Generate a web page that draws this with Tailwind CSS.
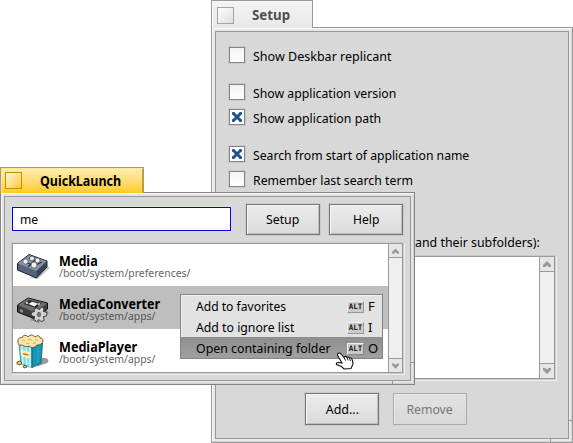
<!DOCTYPE html>
<html lang="en">
<head>
<meta charset="utf-8">
<title>QuickLaunch</title>
<script src="https://cdn.jsdelivr.net/npm/@tailwindcss/browser@4"></script>
</head>
<body class="relative w-[573px] h-[443px] overflow-hidden bg-white font-['Noto_Sans',sans-serif] text-[13px] leading-[18px] text-black">
<svg class="hidden">
  <symbol id="cross" viewBox="0 0 14 14"><path d="M3 3L11 11M11 3L3 11" stroke="#1b5291" stroke-width="2.9"/><path d="M2.500 4.500v-2h2M11.500 4.500v-2h-2M2.500 9.500v2h2M11.500 9.500v2h-2" fill="none" stroke="#1b5291" stroke-width="1"/></symbol>
  <symbol id="up" viewBox="0 0 8 6"><path d="M4 0L8 4V6H6L4 4.500L2 6H0V4Z" fill="#999"/></symbol>
</svg>

<!-- Setup window -->
<section class="absolute left-[211px] top-0 w-[362px] h-[443px] flex flex-col">
  <header class="relative z-10 w-[102px] h-[28px] shrink-0 border border-b-0 border-[#999] bg-linear-to-b from-[#f4f4f4] to-[#e8e8e8] flex items-center shadow-[inset_1px_1px_0_#fafafa]">
    <i class="ml-[5px] mb-[-1px] w-[17px] h-[17px] border border-[#a4a4a4] bg-linear-to-br from-white to-[#dedede]"></i>
    <h1 class="ml-[18px] text-[13.300px] font-bold text-[#505050]">Setup</h1>
  </header>
  <div class="relative mt-[-1px] flex-1 border border-[#999] bg-[#e8e8e8] p-[3px] shadow-[inset_1px_1px_0_#fafafa,inset_-1px_-1px_0_#d4d4d4]">
    <div class="h-full border border-[#999] bg-[#d8d8d8] pl-[13px] pt-[15px]">
      <div class="flex items-center h-[16px]"><i class="w-[16px] h-[16px] border border-[#858585] bg-linear-to-b from-[#f3f3f3] to-white shadow-[0_0_0_1px_#cacaca]"></i><span class="ml-[8px] mt-[2px] whitespace-nowrap origin-left scale-x-[.963]">Show Deskbar replicant</span></div>
      <div class="mt-[21px] flex items-center h-[16px]"><i class="w-[16px] h-[16px] border border-[#858585] bg-linear-to-b from-[#f3f3f3] to-white shadow-[0_0_0_1px_#cacaca]"></i><span class="ml-[8px] mt-[2px] whitespace-nowrap origin-left scale-x-[.943]">Show application version</span></div>
      <div class="mt-[9px] flex items-center h-[16px]"><i class="w-[16px] h-[16px] border border-[#858585] bg-white shadow-[0_0_0_1px_#cacaca]"><svg width="14" height="14"><use href="#cross"/></svg></i><span class="ml-[8px] mt-[2px] whitespace-nowrap origin-left scale-x-[.948]">Show application path</span></div>
      <div class="mt-[21px] flex items-center h-[16px]"><i class="w-[16px] h-[16px] border border-[#858585] bg-white shadow-[0_0_0_1px_#cacaca]"><svg width="14" height="14"><use href="#cross"/></svg></i><span class="ml-[8px] mt-[2px] whitespace-nowrap origin-left scale-x-[.938]">Search from start of application name</span></div>
      <div class="mt-[9px] flex items-center h-[16px]"><i class="w-[16px] h-[16px] border border-[#858585] bg-linear-to-b from-[#f3f3f3] to-white shadow-[0_0_0_1px_#cacaca]"></i><span class="ml-[8px] mt-[2px] whitespace-nowrap origin-left scale-x-[.945]">Remember last search term</span></div>
      <p class="mt-[46px] ml-[186px] whitespace-nowrap origin-left scale-x-[.952]">and their subfolders):</p>
      <div class="mt-[5px] w-[326px] h-[123px] border border-[#999] bg-white flex justify-end shadow-[0_0_0_1px_#cacaca,1px_1px_0_1px_#eee]">
        <div class="w-[15px] border-l border-[#999] bg-[#efefef] flex flex-col justify-between">
          <div class="h-[15px] border-b border-[#999] bg-[#e6e6e6] flex items-center justify-center"><svg width="8" height="6"><use href="#up"/></svg></div>
          <div class="h-[15px] border-t border-[#999] bg-[#e6e6e6] flex items-center justify-center"><svg class="rotate-180" width="8" height="6"><use href="#up"/></svg></div>
        </div>
      </div>
      <div class="mt-[14px] ml-[76px] flex gap-[14px]">
        <div class="w-[74px] h-[32px] border border-[#777] bg-linear-to-b from-[#ececec] to-[#dadada] flex items-center justify-center shadow-[0_0_0_1px_#cacaca,inset_1px_1px_0_#f5f5f5,inset_-1px_-1px_0_#bcbcbc]"><span class="scale-x-[.96]">Add...</span></div>
        <div class="w-[74px] h-[32px] border border-[#aaa] bg-linear-to-b from-[#e2e2e2] to-[#d8d8d8] flex items-center justify-center text-[#777] shadow-[inset_1px_1px_0_#e8e8e8]"><span class="scale-x-[.94]">Remove</span></div>
      </div>
    </div>
    <i class="absolute right-0 bottom-[21px] w-[3px] h-px bg-[#999]"></i>
    <i class="absolute right-[21px] bottom-0 w-px h-[3px] bg-[#999]"></i>
  </div>
</section>

<!-- QuickLaunch window -->
<section class="absolute left-0 top-[167px] w-[415px] h-[218px] flex flex-col">
  <header class="relative z-10 w-[144px] h-[26px] shrink-0 border border-b-0 border-[#999] bg-linear-to-b from-[#ffedb0] to-[#ffcb05] flex items-center shadow-[inset_1px_1px_0_#ffe795,inset_-1px_0_0_#d8a300]">
    <i class="ml-[4px] w-[17px] h-[17px] border border-[#bd9200] bg-linear-to-br from-[#fff6d8] to-[#ffc800]"></i>
    <h1 class="ml-[18px] text-[13.300px] font-bold origin-left scale-x-[.938]">QuickLaunch</h1>
  </header>
  <div class="relative mt-[-1px] flex-1 border border-[#858585] bg-[#e4e4e4] p-[3px] shadow-[inset_1px_1px_0_#fafafa,inset_-1px_-1px_0_#d0d0d0]">
    <div class="h-full border border-[#999] bg-[#d8d8d8] px-[7px] pt-[7px]">
      <div class="flex h-[31px] items-center">
        <div class="mt-[-1px] w-[219px] h-[24px] border border-[#0000e5] bg-white pl-[7px] flex items-center shadow-[0_0_0_1px_#dedede]"><span class="origin-left scale-x-[.93]">me</span></div>
        <div class="ml-[15px] w-[74px] h-[31px] border border-[#777] bg-linear-to-b from-[#ececec] to-[#dadada] flex items-center justify-center shadow-[0_0_0_1px_#cacaca,inset_1px_1px_0_#f5f5f5,inset_-1px_-1px_0_#bcbcbc]"><span class="-mt-px scale-x-[.95]">Setup</span></div>
        <div class="ml-[9px] w-[74px] h-[31px] border border-[#777] bg-linear-to-b from-[#ececec] to-[#dadada] flex items-center justify-center shadow-[0_0_0_1px_#cacaca,inset_1px_1px_0_#f5f5f5,inset_-1px_-1px_0_#bcbcbc]"><span class="-mt-px scale-x-[.93]">Help</span></div>
      </div>
      <div class="mt-[8px] w-[391px] h-[130px] border border-[#999] bg-white flex shadow-[0_0_0_1px_#cacaca,1px_1px_0_1px_#eee]">
        <div class="flex-1">
          <div class="h-[42px] flex pl-[3px]">
            <svg class="mt-[5px]" width="34" height="34" viewBox="0 0 34 34">
              <path d="M14 29l14-14 6 4-12 11z" fill="#aaa" opacity=".6"/>
              <path d="M1.500 14.500L13 5.500L31 12V18L20.500 29L1.500 21Z" fill="#56647a" stroke="#1a1f28" stroke-width="1"/>
              <path d="M2 14.500L13 6L30.500 12.300L20.500 22Z" fill="#8793a5"/>
              <path d="M20.500 22L30.500 12.500V18L20.500 28.500Z" fill="#38445a"/>
              <path d="M8 13l9 3M13 9l8 3M20 16l6-3M12 18l7-7" stroke="#2b3444" stroke-width="1.100"/>
              <g fill="#f2f2f2" stroke="#444" stroke-width=".6"><circle cx="9.500" cy="12.500" r="2.500"/><circle cx="16" cy="9.500" r="2.300"/><circle cx="18" cy="16" r="2.900"/><circle cx="21.500" cy="11.500" r="2.400"/></g>
            </svg>
            <div class="ml-[9px] mt-[9px]"><b class="block text-[14px] leading-[16px] origin-left scale-x-[.9]">Media</b><span class="block text-[11px] leading-[12px] text-[#666] whitespace-nowrap -mt-[2px] origin-left scale-x-[.95]">/boot/system/preferences/</span></div>
          </div>
          <div class="h-[43px] bg-[#bebebe] flex pl-[3px]">
            <svg class="mt-[6px]" width="34" height="34" viewBox="0 0 34 34">
              <path d="M14 28l14-11 5 3-10 11z" fill="#666" opacity=".5"/>
              <path d="M1.500 13L12 6L31.500 11V17L19 27L1.500 20Z" fill="#3e3e3e" stroke="#111" stroke-width="1"/>
              <path d="M2 13L12 6.500L31 11.500L19 20.500Z" fill="#707070"/>
              <path d="M7.500 12L13 8L26 11.500L20 16Z" fill="#2a2a2a"/><path d="M12.500 12l3.500-2.200 6 1.700-3.500 3z" fill="#f4f4f4"/><circle cx="11" cy="11" r="1.300" fill="#bbb"/><circle cx="23" cy="12.300" r="1.300" fill="#bbb"/>
              <path d="M4 17l3 1v3l-3-1z" fill="#888"/>
              <path d="M20.500 16l3 1.500 1.500-2.500 3 1-.5 3.500 3.500 1-.5 3.500-3 .5.500 4-3 1-2-2-2.500 2-2.500-2 .5-3-3.500-1 .5-3 3-1-.5-2.500z" fill="#d2d2d2" stroke="#333" stroke-width=".9"/><ellipse cx="23" cy="22.500" rx="1.700" ry="2.200" fill="#777" stroke="#444" stroke-width=".6"/>
            </svg>
            <div class="ml-[9px] mt-[10px]"><b class="block text-[14px] leading-[16px] origin-left scale-x-[.893]">MediaConverter</b><span class="block text-[11px] leading-[12px] text-[#555] whitespace-nowrap -mt-[2px] origin-left scale-x-[.945]">/boot/system/apps/</span></div>
          </div>
          <div class="h-[43px] flex pl-[3px]">
            <svg class="mt-[4px]" width="34" height="36" viewBox="0 0 34 36">
              <path d="M20 34L26 25C32 24 34 28 31 30Z" fill="#999"/>
              <path d="M3 11L16 14V34.500L5 31Z" fill="#7fdcec" stroke="#1c7f95" stroke-width=".8"/>
              <path d="M16 14L26.500 10L25 30L16 34.500Z" fill="#1698b4" stroke="#0c5366" stroke-width=".8"/>
              <path d="M6 12l1 19.500M10 13l.7 20M14 14v20" stroke="#d8f7fc" stroke-width="1.300"/><path d="M22 13v17" stroke="#2aa9c3" stroke-width="1.200"/>
              <path d="M4.500 17l9.500 2v6.500l-8.500-2z" fill="#fff0b5"/><path d="M7 20l5.500 1.300v1.500L7 21.500z" fill="#e2602f"/>
              <path d="M2 9C1 5 5 4 6 5C7 1 11 2 12 4C15 0 18 3 19 4C23 1 24 4 24 5C28 5 27 9 26 10C24 13 21 11 20 13C17 16 14 14 13 13C9 15 7 12 6 12C3 13 2 11 2 9Z" fill="#f8e5ac" stroke="#5b481c" stroke-width=".9"/>
              <path d="M6 8q2-2 3 0M12 7q3-2 4 1M19 7q2-1 3 1M10 11q2-2 3 0M17 11q1-2 3-1" fill="none" stroke="#cda755" stroke-width=".9"/>
              <path d="M1 29l3-1 2 2-2 2-3-1zM7 33l3-1 1 2-3 1z" fill="#e9cb60" stroke="#4c3a12" stroke-width=".8"/>
            </svg>
            <div class="ml-[9px] mt-[10px]"><b class="block text-[14px] leading-[16px] origin-left scale-x-[.9]">MediaPlayer</b><span class="block text-[11px] leading-[12px] text-[#666] whitespace-nowrap -mt-[2px] origin-left scale-x-[.945]">/boot/system/apps/</span></div>
          </div>
        </div>
        <div class="w-[14px] border-l border-[#999] bg-[#efefef] flex flex-col justify-between">
          <div class="h-[14px] border-b border-[#999] bg-[#e6e6e6] flex items-center justify-center"><svg width="7" height="6"><use href="#up"/></svg></div>
          <div class="h-[14px] border-t border-[#999] bg-[#e6e6e6] flex items-center justify-center"><svg class="rotate-180" width="7" height="6"><use href="#up"/></svg></div>
        </div>
      </div>
    </div>
    <i class="absolute right-0 bottom-[21px] w-[3px] h-px bg-[#999]"></i>
    <i class="absolute right-[21px] bottom-0 w-px h-[3px] bg-[#999]"></i>
  </div>
</section>

<!-- Context menu -->
<div class="absolute left-[180px] top-[294px] w-[203px] h-[65px] border border-[#858585] bg-[#e2e2e2] shadow-[inset_1px_1px_0_#f2f2f2]">
  <div class="h-[21px] flex items-center pl-[15px]"><span class="w-[151px] mt-px whitespace-nowrap origin-left scale-x-[.93]">Add to favorites</span><kbd class="w-[17px] h-[12px] mt-[2px] bg-[#ccc] border border-[#eee] border-r-[#999] border-b-[#999] flex items-center justify-center font-['DejaVu_Sans_Mono',monospace] font-bold text-[7.500px] leading-none text-[#222]">ALT</kbd><span class="ml-[4px] mt-px">F</span></div>
  <div class="h-[21px] flex items-center pl-[15px]"><span class="w-[151px] mt-px whitespace-nowrap origin-left scale-x-[.943]">Add to ignore list</span><kbd class="w-[17px] h-[12px] mt-[2px] bg-[#ccc] border border-[#eee] border-r-[#999] border-b-[#999] flex items-center justify-center font-['DejaVu_Sans_Mono',monospace] font-bold text-[7.500px] leading-none text-[#222]">ALT</kbd><span class="ml-[4px] mt-px">I</span></div>
  <div class="h-[21px] flex items-center pl-[15px] bg-linear-to-b from-[#8e8e8e] to-[#a0a0a0]"><span class="w-[151px] mt-px whitespace-nowrap origin-left scale-x-[.95]">Open containing folder</span><kbd class="w-[17px] h-[12px] mt-[2px] bg-[#ccc] border border-[#eee] border-r-[#888] border-b-[#888] flex items-center justify-center font-['DejaVu_Sans_Mono',monospace] font-bold text-[7.500px] leading-none text-[#222]">ALT</kbd><span class="ml-[4px] mt-px">O</span></div>
</div>

<!-- Hand cursor -->
<svg class="absolute left-[335px] top-[352px]" width="20" height="18" viewBox="0 0 20 18"><path d="M3 1.500C4 .5 5 1 6 2L9 5.500C9.500 4 11 4 12 5.500C12.500 4.500 14 5 14.500 6C15.500 5.500 17 6.500 17.300 8L18 12L16 16.500L9 17L6.500 14.500L1.500 12.500C1 11 2 10.500 3.500 10.500L7 11L3 4C2.300 3 2.500 2 3 1.500Z" fill="#fff" stroke="#111" stroke-width="1.100"/><path d="M9 5.500l1.500 3M12 5.500l1 3M14.500 6.500l1 2.500" stroke="#111" stroke-width=".9"/></svg>
</body>
</html>
